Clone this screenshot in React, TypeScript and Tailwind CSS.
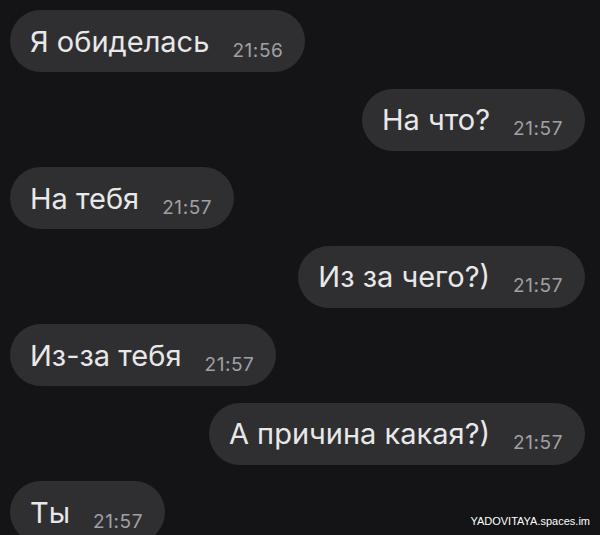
import React from 'react';

type Message = {
  text: string;
  time: string;
  mine: boolean;
};

const messages: Message[] = [
  { text: 'Я обиделась', time: '21:56', mine: false },
  { text: 'На что?', time: '21:57', mine: true },
  { text: 'На тебя', time: '21:57', mine: false },
  { text: 'Из за чего?)', time: '21:57', mine: true },
  { text: 'Из-за тебя', time: '21:57', mine: false },
  { text: 'А причина какая?)', time: '21:57', mine: true },
  { text: 'Ты', time: '21:57', mine: false },
];

function Bubble({ text, time, mine }: Message) {
  return (
    <div
      className={`flex h-[62px] shrink-0 items-center rounded-[31px] bg-[#2f2f31] pl-[20px] pr-[22px] ${
        mine ? 'self-end' : 'self-start'
      }`}
    >
      <div className="flex items-baseline">
        <span className="text-[29px] leading-none text-[#e8e8e8]">{text}</span>
        <span className="ml-[23px] translate-y-[5px] text-[19px] leading-none tracking-[0.03em] text-[#a0a0a4]">
          {time}
        </span>
      </div>
    </div>
  );
}

export default function App() {
  return (
    <div
      className="relative h-[535px] w-[600px] overflow-hidden bg-[#141416]"
      style={{ fontFamily: 'Inter, "Liberation Sans", sans-serif' }}
    >
      <div className="flex flex-col gap-[16.5px] pl-[10px] pr-[15px] pt-[10px]">
        {messages.map((m, i) => (
          <Bubble key={i} {...m} />
        ))}
      </div>

      {/* watermark */}
      <div
        className="absolute bottom-[6px] right-[10px] text-[11px] text-white"
        style={{ fontFamily: '"Liberation Sans", Arial, sans-serif' }}
      >
        YADOVITAYA.spaces.im
      </div>
    </div>
  );
}
